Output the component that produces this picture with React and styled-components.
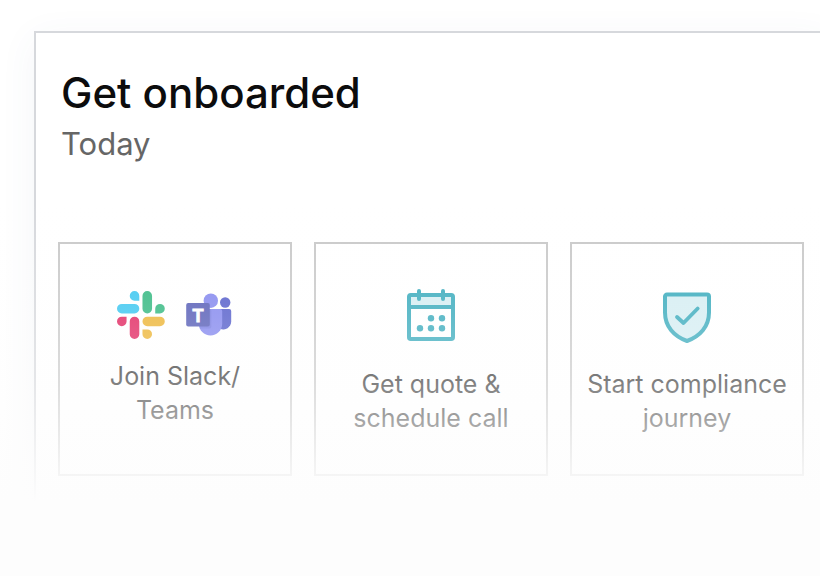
import React from "react";
import styled, { createGlobalStyle } from "styled-components";

const GlobalStyle = createGlobalStyle`
  * {
    box-sizing: border-box;
  }
  body {
    margin: 0;
    background: #fdfdfd;
    font-family: "Inter", "Liberation Sans", sans-serif;
  }
`;

const Page = styled.main`
  position: relative;
  min-height: 100vh;
  padding: 31px 0 0 34px;
  overflow: hidden;
  background: white;

  /* fades the panel out towards the bottom */
  &::after {
    content: "";
    position: absolute;
    inset: 0;
    pointer-events: none;
    background: linear-gradient(
      to bottom,
      rgba(253, 253, 253, 0) 200px,
      rgba(253, 253, 253, 0.22) 315px,
      rgba(253, 253, 253, 0.36) 376px,
      rgba(253, 253, 253, 0.52) 412px,
      rgba(253, 253, 253, 0.84) 474px,
      #fdfdfd 502px
    );
  }
`;

const Panel = styled.section`
  min-height: calc(100vh - 31px);
  margin-right: -8px;
  padding: 36px 22px 100px;
  border: 2px solid #d6d8dc;
  background: white;
  box-shadow: 0 8px 36px rgba(70, 90, 130, 0.06);
`;

const Title = styled.h1`
  margin: 0;
  padding-left: 3px;
  font-size: 42px;
  font-weight: 500;
  line-height: 48px;
  color: #0c0c0d;
`;

const Subtitle = styled.p`
  margin: 0;
  padding-left: 3px;
  font-size: 31px;
  line-height: 54px;
  color: #666;
`;

const Steps = styled.ul`
  display: grid;
  grid-template-columns: repeat(3, 1fr);
  gap: 22px;
  margin: 71px 0 0;
  padding: 0;
  list-style: none;
`;

const Step = styled.li`
  display: flex;
  flex-direction: column;
  align-items: center;
  min-height: 234px;
  padding-top: 44px;
  border: 2px solid #c8c8c8;
  text-align: center;
`;

const Icons = styled.div`
  display: flex;
  align-items: center;
  justify-content: center;
  gap: 21px;
  height: 54px;
`;

const Label = styled.p`
  margin: ${(props) => (props.$compact ? "17px" : "25px")} 0 0;
  font-size: 25px;
  line-height: 34px;
  color: #303030;
`;

const SlackIcon = () => (
  <svg width="48" height="48" viewBox="0 0 54 54" aria-hidden="true">
    <path
      fill="#36C5F0"
      d="M19.712.133a5.381 5.381 0 0 0-5.376 5.387 5.381 5.381 0 0 0 5.376 5.386h5.376V5.52A5.381 5.381 0 0 0 19.712.133m0 14.365H5.376A5.381 5.381 0 0 0 0 19.884a5.381 5.381 0 0 0 5.376 5.387h14.336a5.381 5.381 0 0 0 5.376-5.387 5.381 5.381 0 0 0-5.376-5.386"
    />
    <path
      fill="#2EB67D"
      d="M53.76 19.884a5.381 5.381 0 0 0-5.376-5.386 5.381 5.381 0 0 0-5.376 5.386v5.387h5.376a5.381 5.381 0 0 0 5.376-5.387m-14.336 0V5.52A5.381 5.381 0 0 0 34.048.133a5.381 5.381 0 0 0-5.376 5.387v14.364a5.381 5.381 0 0 0 5.376 5.387 5.381 5.381 0 0 0 5.376-5.387"
    />
    <path
      fill="#ECB22E"
      d="M34.048 54a5.381 5.381 0 0 0 5.376-5.387 5.381 5.381 0 0 0-5.376-5.386h-5.376v5.386A5.381 5.381 0 0 0 34.048 54m0-14.365h14.336a5.381 5.381 0 0 0 5.376-5.386 5.381 5.381 0 0 0-5.376-5.387H34.048a5.381 5.381 0 0 0-5.376 5.387 5.381 5.381 0 0 0 5.376 5.386"
    />
    <path
      fill="#E01E5A"
      d="M0 34.249a5.381 5.381 0 0 0 5.376 5.386 5.381 5.381 0 0 0 5.376-5.386v-5.387H5.376A5.381 5.381 0 0 0 0 34.25m14.336-.001v14.364A5.381 5.381 0 0 0 19.712 54a5.381 5.381 0 0 0 5.376-5.387V34.25a5.381 5.381 0 0 0-5.376-5.387 5.381 5.381 0 0 0-5.376 5.387"
    />
  </svg>
);

const TeamsIcon = () => (
  <svg width="47" height="44" viewBox="0 0 47 44" aria-hidden="true">
    <circle cx="39.2" cy="9.5" r="5.2" fill="#5059C9" />
    <path fill="#5059C9" d="M34 16h9.200a2 2 0 0 1 2 2v10.500a8 8 0 0 1-11.200 7.300z" />
    <circle cx="24.8" cy="7.7" r="7.2" fill="#8084ee" />
    <path fill="#8084ee" d="M14 16h20.200a2 2 0 0 1 2 2v12.700a11.700 11.700 0 0 1-23.400 0V16z" />
    <path fill="#5a60c4" opacity="0.3" d="M12.800 16h11.500a2 2 0 0 1 1 1.500v16a2 2 0 0 1-2 2H13.800z" />
    <rect x="0.200" y="10" width="23.600" height="23.500" rx="2" fill="#5158B4" />
    <text
      x="12"
      y="28.500"
      textAnchor="middle"
      fontFamily="Liberation Sans, sans-serif"
      fontSize="18"
      fontWeight="700"
      fill="white"
      stroke="white"
      strokeWidth="0.8"
    >
      T
    </text>
  </svg>
);

const CalendarIcon = () => (
  <svg width="48" height="52" viewBox="0 0 48 52" aria-hidden="true">
    <rect x="2" y="6" width="44" height="12" fill="#d4edf2" />
    <g fill="none" stroke="#35a9bb" strokeWidth="4">
      <rect x="2" y="6" width="44" height="44" rx="1.8" />
      <path d="M2 18h44" />
      <path d="M12 2v8M36 2v8" strokeLinecap="round" />
    </g>
    <g fill="#35a9bb">
      <circle cx="24" cy="29.3" r="3.2" />
      <circle cx="35" cy="29.3" r="3.2" />
      <circle cx="13" cy="39.3" r="3.2" />
      <circle cx="24" cy="39.3" r="3.2" />
      <circle cx="35" cy="39.3" r="3.2" />
    </g>
  </svg>
);

const ShieldIcon = () => (
  <svg
    width="48"
    height="54"
    viewBox="0 -4 48 54"
    fill="none"
    stroke="#35a9bb"
    strokeWidth="4"
    strokeLinejoin="round"
    overflow="visible"
    aria-hidden="true"
  >
    <path
      fill="#d4edf2"
      d="M4 2.500h40a2 2 0 0 1 2 2v16c0 14-9 24-22 28.500C11 44.500 2 34.500 2 20.500v-16a2 2 0 0 1 2-2z"
    />
    <path d="M14 25l6.500 6 14.200-14.500" strokeLinecap="round" strokeWidth="3.800" />
  </svg>
);

export default function App() {
  return (
    <>
      <GlobalStyle />
      <Page>
        <Panel>
          <Title>Get onboarded</Title>
          <Subtitle>Today</Subtitle>
          <Steps>
            <Step>
              <Icons>
                <SlackIcon />
                <TeamsIcon />
              </Icons>
              <Label $compact>
                Join Slack/
                <br />
                Teams
              </Label>
            </Step>
            <Step>
              <Icons>
                <CalendarIcon />
              </Icons>
              <Label>
                Get quote &amp;
                <br />
                schedule call
              </Label>
            </Step>
            <Step>
              <Icons>
                <ShieldIcon />
              </Icons>
              <Label>
                Start compliance
                <br />
                journey
              </Label>
            </Step>
          </Steps>
        </Panel>
      </Page>
    </>
  );
}
